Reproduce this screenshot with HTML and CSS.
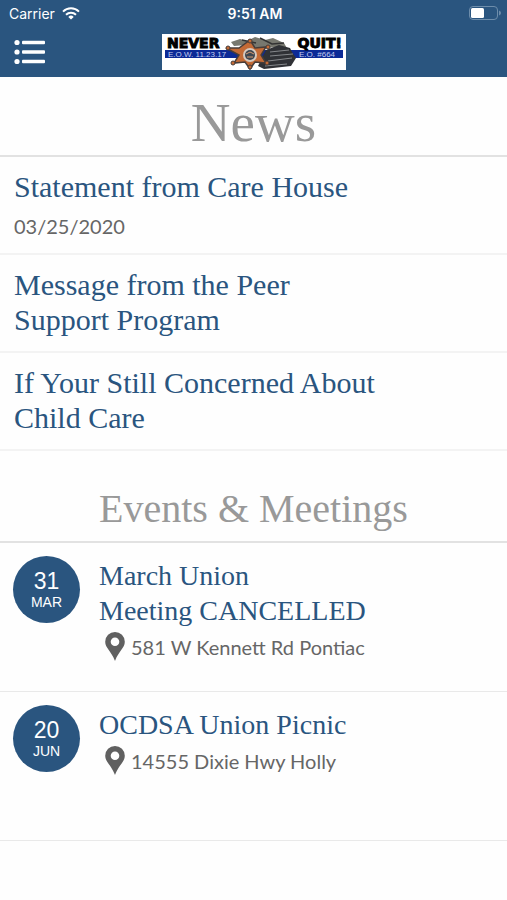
FILE: index.html
```
<!DOCTYPE html>
<html lang="en">
<head>
    <meta charset="UTF-8">
    <meta name="viewport" content="width=device-width, initial-scale=1">
    <title>News</title>
    <link rel="stylesheet" href="styles.css">
</head>

<body>
    <header class="header">
        <div class="status">
            <div class="carrier">
                <span>Carrier</span>
                <svg width="18" height="13" viewBox="0 0 18 13" fill="none" stroke="#fff" stroke-width="2">
                    <path d="M1 4.6a11.5 11.5 0 0 1 16 0" />
                    <path d="M4 7.8a7.2 7.2 0 0 1 10 0" />
                    <path d="M9 12.6 6.3 9.9a3.9 3.9 0 0 1 5.4 0z" fill="#fff" stroke="none" />
                </svg>
            </div>
            <div class="time">9:51 AM</div>
            <svg class="battery" width="32" height="15" viewBox="0 0 32 15">
                <rect x="0.5" y="0.5" width="28" height="13" rx="3.5" fill="none" stroke="#6d8dab" />
                <rect x="2" y="2" width="13" height="10" rx="1.5" fill="#fff" />
                <path d="M30 4.5q2 .8 2 2.5t-2 2.5z" fill="#6d8dab" />
            </svg>
        </div>
        <nav class="navbar">
            <button class="menu" type="button" aria-label="Menu">
                <svg width="31" height="26" viewBox="0 0 31 26" fill="#fff">
                    <circle cx="3" cy="3.5" r="2.6" />
                    <circle cx="3" cy="13" r="2.6" />
                    <circle cx="3" cy="22.5" r="2.6" />
                    <rect x="8" y="1.8" width="23" height="3.4" rx="1" />
                    <rect x="8" y="11.3" width="23" height="3.4" rx="1" />
                    <rect x="8" y="20.8" width="23" height="3.4" rx="1" />
                </svg>
            </button>
            <svg class="logo" width="184" height="36" viewBox="0 0 184 36">
                <rect width="184" height="36" fill="#fff" />
                <rect x="3" y="16" width="178" height="8" fill="#0c2a96" />
                <text class="logo-name" x="5" y="14">NEVER</text>
                <text class="logo-name" x="180" y="14" text-anchor="end">QUIT!</text>
                <text class="logo-small" x="6" y="23">E.O.W. 11.23.17</text>
                <text class="logo-small" x="137" y="23">E.O. #664</text>
                <!-- ribbon and smoke behind the badge -->
                <path d="M69 8l9-3 7 2 8-4 10 3 8-2 11 5 4 7-13-3-14 2-15-4-12 1z" fill="#77786f" />
                <path d="M80 6l14 3M98 4l12 6 12-1" stroke="#333" stroke-width="1.5" fill="none" />
                <path d="M104 16l13-5 11 3 2 4 4 6-5 8-27 3-6-3z" fill="#303236" />
                <path d="M108 18l19-2M108 22l23-2M106 27l24-3M103 32l22-2" stroke="#85888b" stroke-width="1" />
                <path d="M88 6l5 8 11-1-5 8 5 8-11-1-5 7-5-7-11 1 5-8-13-7 13 0z" fill="#c46a35" stroke="#463d3a" stroke-width="1.5" />
                <g fill="#c46a35" stroke="#463d3a">
                    <circle cx="88" cy="7" r="2" />
                    <circle cx="66" cy="14" r="2" />
                    <circle cx="71" cy="29" r="2" />
                    <circle cx="88" cy="33" r="2" />
                    <circle cx="105" cy="29" r="2" />
                    <circle cx="106" cy="13" r="2" />
                </g>
                <circle cx="88" cy="21" r="7" fill="#d5c9c0" />
                <circle cx="88" cy="21" r="5" fill="#3e4650" />
                <path d="M84 20l4-2 4 2M85 23h6" stroke="#d99a70" fill="none" />
            </svg>
        </nav>
    </header>

    <main>
        <section class="news">
            <h1 class="heading">News</h1>
            <ul class="list">
                <li class="news-item">
                    <a class="title" href="#">Statement from Care House</a>
                    <span class="date">03/25/2020</span>
                </li>
                <li class="news-item">
                    <a class="title" href="#">Message from the Peer<br>Support Program</a>
                </li>
                <li class="news-item">
                    <a class="title" href="#">If Your Still Concerned About<br>Child Care</a>
                </li>
            </ul>
        </section>

        <section class="events">
            <h2 class="heading heading-small">Events &amp; Meetings</h2>
            <ul class="list">
                <li class="event">
                    <div class="badge">
                        <span class="day">31</span>
                        <span class="month">MAR</span>
                    </div>
                    <div class="event-info">
                        <a class="title" href="#">March Union<br>Meeting CANCELLED</a>
                        <div class="place">
                            <svg width="20" height="29" viewBox="0 0 20 29">
                                <path d="M10 0a9.8 9.8 0 0 0-9.8 9.8C.2 16 6 18.5 10 29c4-10.5 9.8-13 9.8-19.200A9.8 9.8 0 0 0 10 0zm0 5.500a4.300 4.300 0 1 1 0 8.600 4.300 4.300 0 0 1 0-8.600z" fill="#606060" />
                            </svg>
                            <span>581 W Kennett Rd Pontiac</span>
                        </div>
                    </div>
                </li>
                <li class="event">
                    <div class="badge">
                        <span class="day">20</span>
                        <span class="month">JUN</span>
                    </div>
                    <div class="event-info">
                        <a class="title" href="#">OCDSA Union Picnic</a>
                        <div class="place">
                            <svg width="20" height="29" viewBox="0 0 20 29">
                                <path d="M10 0a9.8 9.8 0 0 0-9.8 9.8C.2 16 6 18.5 10 29c4-10.5 9.8-13 9.8-19.200A9.8 9.8 0 0 0 10 0zm0 5.500a4.300 4.300 0 1 1 0 8.600 4.300 4.300 0 0 1 0-8.600z" fill="#606060" />
                            </svg>
                            <span>14555 Dixie Hwy Holly</span>
                        </div>
                    </div>
                </li>
            </ul>
        </section>
    </main>
</body>
</html>
```

FILE: styles.css
```
* {
    box-sizing: border-box;
}

body {
    margin: 0;
    background: #fefefe;
    color: #666;
    font-family: Lato, sans-serif;
}

.header {
    background: #2a557f;
    color: #fff;
}

.status {
    display: grid;
    grid-template-columns: 1fr auto 1fr;
    align-items: center;
    height: 27px;
    padding: 0 6px 0 9px;
    font-family: Inter, sans-serif;
    font-size: 14px;
}

.carrier {
    display: flex;
    align-items: center;
    gap: 7px;
}

.time {
    font-weight: 600;
}

.battery {
    justify-self: end;
}

.navbar {
    display: grid;
    grid-template-columns: 1fr auto 1fr;
    align-items: center;
    height: 50px;
    padding: 0 14px;
}

.menu {
    display: flex;
    justify-self: start;
    padding: 0;
    border: none;
    background: none;
}

.logo {
    display: block;
}

.logo-name {
    font: bold 14px "DejaVu Sans", sans-serif;
    stroke: #000;
    stroke-width: 1px;
}

.logo-small {
    font: 8px "Liberation Sans", sans-serif;
    fill: #c5cdf0;
}

.heading {
    margin: 0;
    padding: 13px 0 0;
    border-bottom: 2px solid #e2e2e2;
    color: #999;
    font-family: "Liberation Serif", serif;
    font-size: 55px;
    font-weight: normal;
    line-height: 65px;
    text-align: center;
}

.heading-small {
    padding: 34px 0 8px;
    font-size: 40px;
    line-height: 48px;
}

.list {
    margin: 0;
    padding: 0;
    list-style: none;
}

.news-item {
    min-height: 98px;
    padding: 12px 14px;
    border-bottom: 2px solid #f3f3f3;
}

.title {
    display: block;
    color: #2a557f;
    font-family: "Liberation Serif", serif;
    font-size: 30px;
    line-height: 35px;
    text-decoration: none;
}

.date {
    display: block;
    margin-top: 10px;
    font-size: 20px;
    line-height: 24px;
}

.event {
    display: flex;
    gap: 19px;
    min-height: 149px;
    padding: 13px;
    border-bottom: 1px solid #e9e9e9;
}

.event .title {
    padding-top: 2px;
    font-size: 28px;
}

.badge {
    display: flex;
    flex-direction: column;
    flex-shrink: 0;
    align-items: center;
    justify-content: center;
    width: 67px;
    height: 67px;
    border-radius: 50%;
    background: #2a557f;
    color: #fff;
    font-family: "Liberation Sans", sans-serif;
}

.day {
    font-size: 23px;
    line-height: 24px;
}

.month {
    font-size: 14px;
    line-height: 18px;
}

.place {
    display: flex;
    align-items: center;
    gap: 6px;
    margin-top: 4px;
    padding-left: 6px;
    font-size: 20px;
    line-height: 24px;
}
```
